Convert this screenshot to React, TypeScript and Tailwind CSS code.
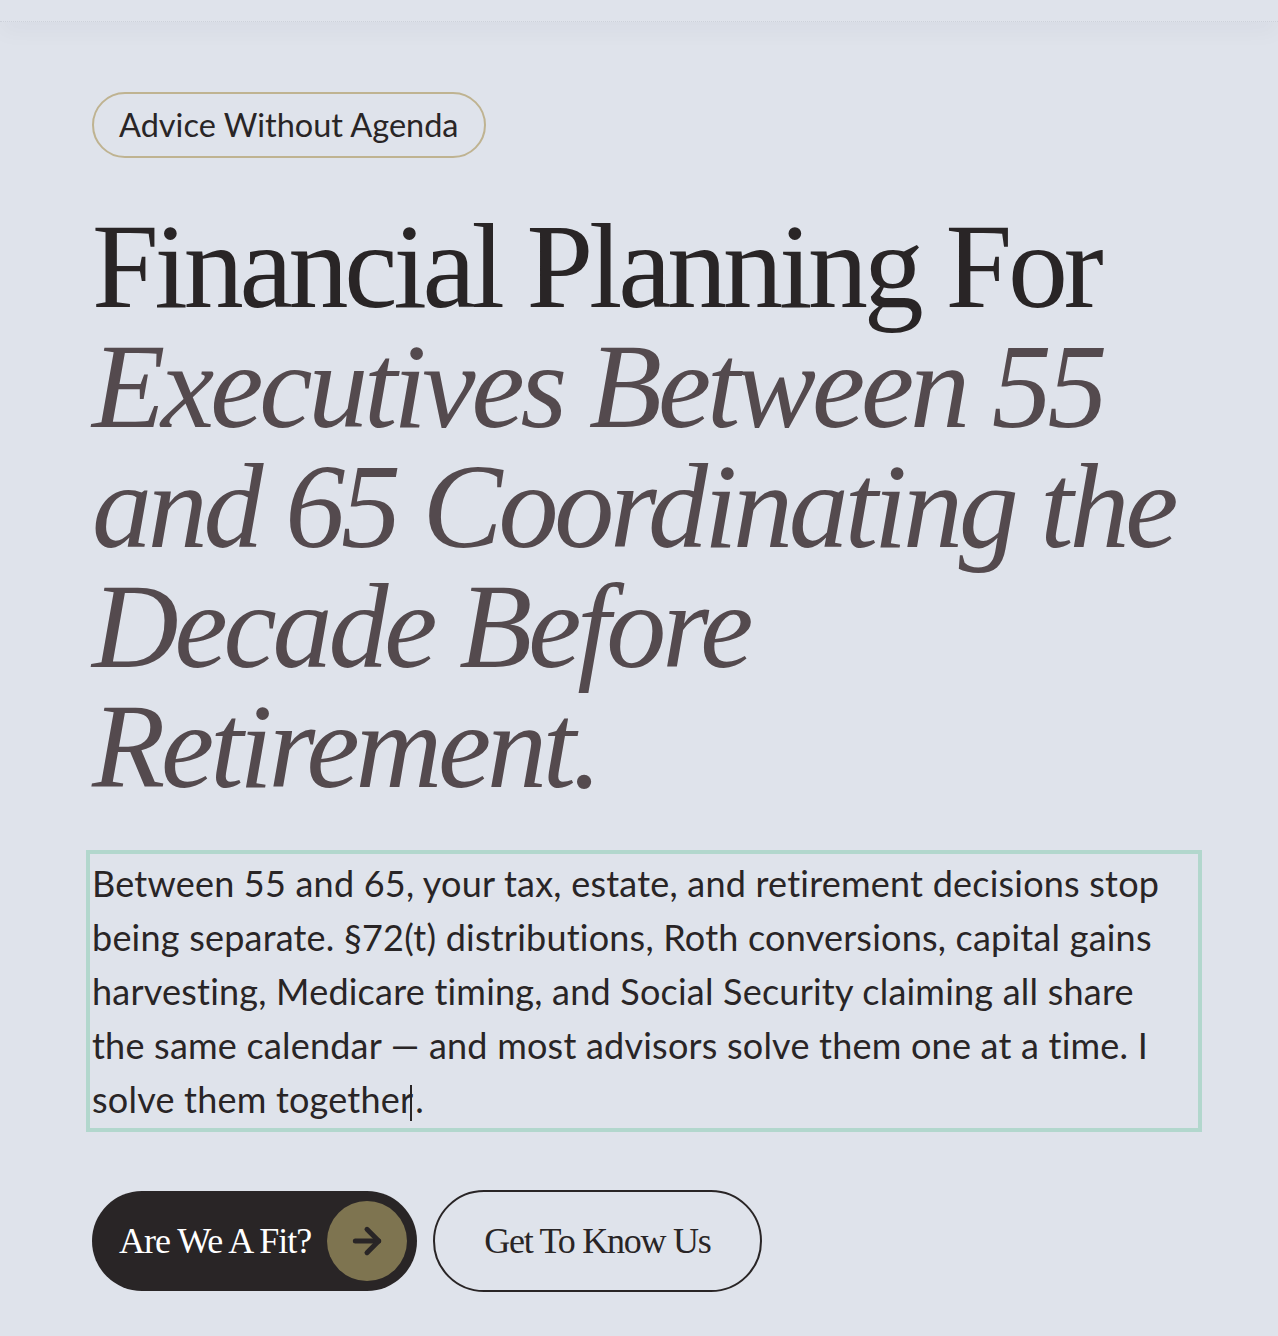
import { ArrowRight } from "lucide-react";

const sans = "font-['Lato',_'Open_Sans',_sans-serif]";
const serif = "font-['Liberation_Serif',_'Times_New_Roman',_serif]";

export default function App() {
  return (
    <div className="min-h-[1336px] bg-[#dfe3eb] text-[#292526]">
      {/* header edge */}
      <div className="h-[22px] border-b border-dotted border-[#cdd1da] shadow-[0_10px_22px_rgba(40,40,60,0.035)]" />

      <main className="pl-[92px] pt-[70px]">
        <div className="w-[1104px]">
          <span
            className={`inline-flex h-[66px] items-center rounded-full border-2 border-[#bfb391] px-[25px] text-[32.5px] ${sans}`}
          >
            Advice Without Agenda
          </span>

          <h1 className={`mt-[49px] text-[120px] leading-[120px] font-normal tracking-[-0.035em] ${serif}`}>
            <span className="block text-[#292526]">Financial Planning For</span>
            <em className="text-[#544a4e]">
              Executives Between 55 and 65 Coordinating the Decade Before Retirement.
            </em>
          </h1>

          <p
            className={`mt-[49px] text-[36px] leading-[54px] tracking-[0.006em] outline-4 outline-offset-2 outline-[#b2d7cd] ${sans}`}
          >
            Between 55 and 65, your tax, estate, and retirement decisions stop
            <br />
            being separate. §72(t) distributions, Roth conversions, capital gains
            <br />
            harvesting, Medicare timing, and Social Security claiming all share
            <br />
            the same calendar — and most advisors solve them one at a time. I
            <br />
            solve them together
            <span className="inline-block h-[36px] w-[2px] -translate-x-[3px] translate-y-[8px] bg-[#292526] align-baseline" />
            .
          </p>

          <div className="mt-[64px] flex items-center gap-[16px]">
            <button
              className={`flex h-[100px] items-center gap-[16px] rounded-full bg-[#292526] pl-[27px] pr-[10px] text-[36px] tracking-[-0.028em] text-white ${serif}`}
            >
              Are We A Fit?
              <span className="flex h-[80px] w-[80px] items-center justify-center rounded-full bg-[#7e7450]">
                <ArrowRight className="h-[40px] w-[40px] text-[#292526]" strokeWidth={3} />
              </span>
            </button>
            <button
              className={`flex h-[102px] items-center rounded-full border-2 border-[#292526] px-[49px] text-[36px] tracking-[-0.035em] text-[#292526] ${serif}`}
            >
              Get To Know Us
            </button>
          </div>
        </div>
      </main>
    </div>
  );
}
